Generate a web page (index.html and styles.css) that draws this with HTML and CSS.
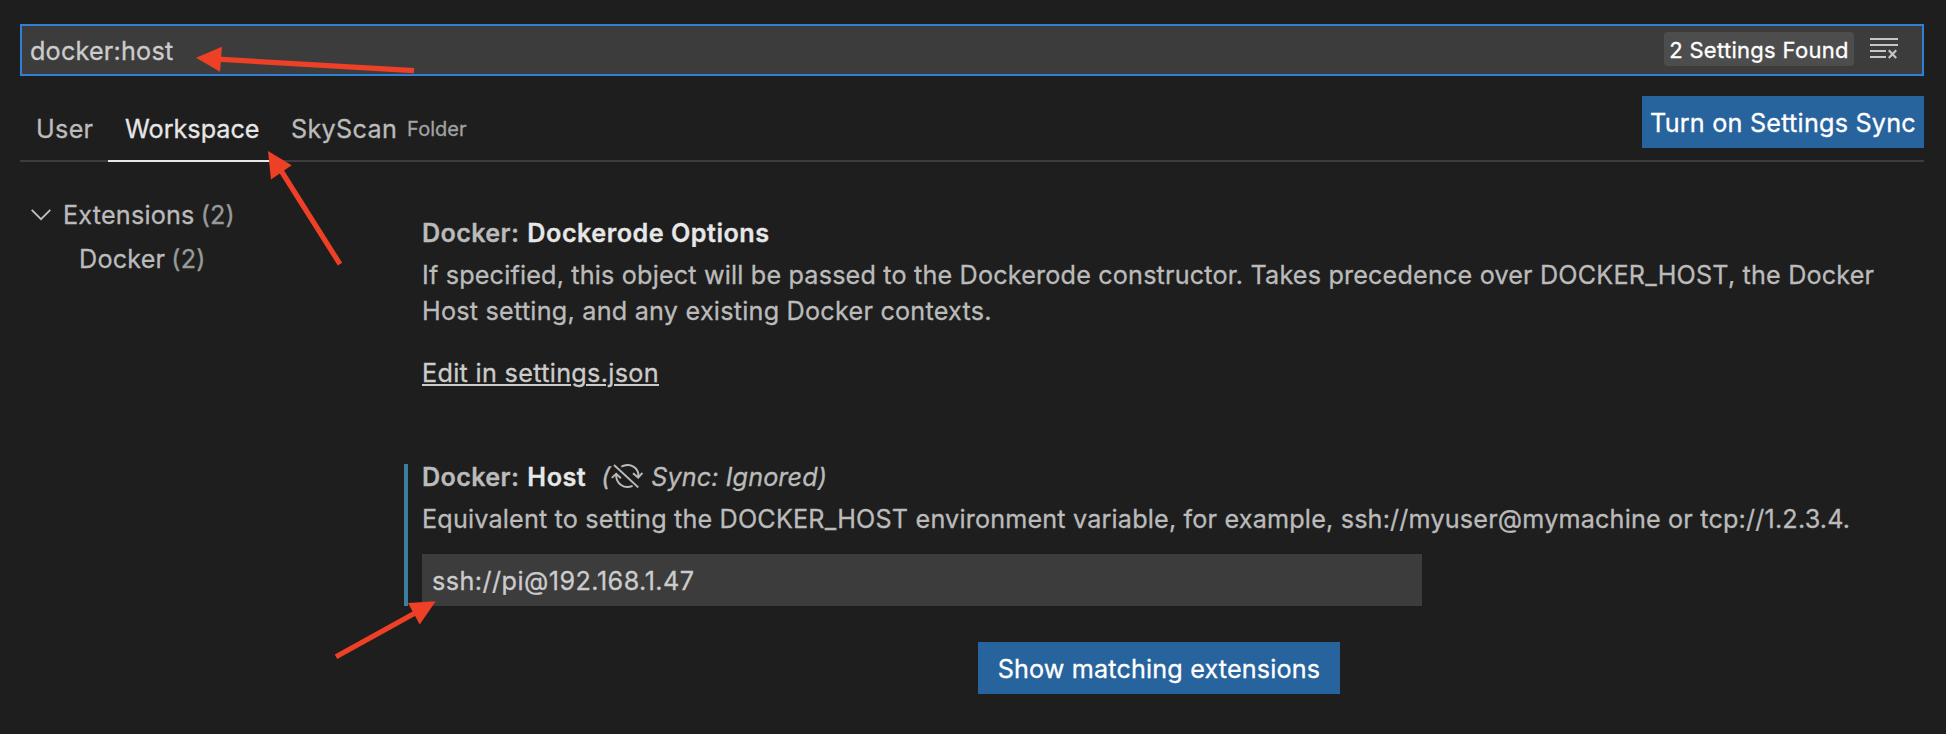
FILE: index.html
```html
<!DOCTYPE html>
<html lang="en">
<head>
<meta charset="utf-8">
<title>Settings</title>
<link rel="stylesheet" href="styles.css">
</head>
<body>
<main class="settings-editor">
  <div class="search">
    <span class="search-text">docker:host</span>
    <span class="count-badge">2 Settings Found</span>
    <svg class="clear-icon" width="28" height="22" viewBox="0 0 28 22" fill="none" stroke="#c5c5c5" stroke-width="2">
      <path d="M0 1H28M0 7H28M0 13H16M0 19H16"/>
      <path d="M18.8 12.3L26.2 20M26.2 12.3L18.8 20" stroke-width="2.2"/>
    </svg>
  </div>

  <header class="header">
    <nav class="tabs">
      <a class="tab user">User</a>
      <a class="tab active">Workspace</a>
      <a class="tab folder">SkyScan<span class="tab-detail">Folder</span></a>
    </nav>
    <button class="button sync-button">Turn on Settings Sync</button>
  </header>

  <div class="body">
    <aside class="toc">
      <div class="toc-row">
        <svg class="chevron" width="20" height="12" viewBox="0 0 20 12" fill="none" stroke="#c0c0c0" stroke-width="1.8"><path d="M.7 .9L10 10.2L19.3 .9"/></svg>
        <span>Extensions</span><span class="toc-count">(2)</span>
      </div>
      <div class="toc-row child"><span>Docker</span><span class="toc-count">(2)</span></div>
    </aside>

    <section class="list">
      <article class="setting">
        <h2 class="title"><span class="category">Docker:</span><span class="label">Dockerode Options</span></h2>
        <p class="description">If specified, this object will be passed to the Dockerode constructor. Takes precedence over DOCKER_HOST, the Docker<br><span class="second-line">Host setting, and any existing Docker contexts.</span></p>
        <a class="edit-link">Edit in settings.json</a>
      </article>

      <article class="setting modified">
        <h2 class="title"><span class="category">Docker:</span><span class="label">Host</span>
          <span class="sync-note"><span class="paren">(</span><svg class="sync-icon" width="32" height="24" viewBox="0 0 32 24" fill="none" stroke="#bbb" stroke-width="1.9">
              <path d="M3 1L27.3 23.4"/>
              <path d="M10.3 2.6C18.8-1.7 28.3 3.3 27.4 13.2M22 9.2L27.2 13.6L31.4 9"/>
              <path d="M5.1 10C4.6 19.7 13.2 25.5 21.6 21.8M.8 13.9L5.2 9.8L9.9 14.2"/>
            </svg><span class="sync-text">Sync: Ignored)</span></span>
        </h2>
        <p class="description">Equivalent to setting the DOCKER_HOST environment variable, for example, ssh://myuser@mymachine or tcp://1.2.3.4.</p>
        <div class="value-input">ssh://pi@192.168.1.47</div>
      </article>

      <button class="button match-button">Show matching extensions</button>
    </section>
  </div>
</main>

<svg class="annotations" width="1946" height="734" viewBox="0 0 1946 734">
  <g stroke="#ee4026" stroke-width="5.2"><path d="M218 59.2L414 70.6M280 169L340 264.2M416 612.5L336 656.7"/></g>
  <g fill="#ee4026">
    <path d="M196 57.7L222 46.7L220 71.7Z"/>
    <path d="M268 151L291.7 165.3L271 179.5Z"/>
    <path d="M435.7 601.3L408 603L419.7 624.5Z"/>
  </g>
</svg>
</body>
</html>
```
FILE: styles.css
```css
* { box-sizing: border-box; }

body {
  margin: 0;
  width: 1946px;
  height: 734px;
  overflow: hidden;
  background: #1e1e1e;
  color: #bbb;
  font-family: Inter, "Liberation Sans", sans-serif;
  font-size: 25.2px;
  line-height: 36px;
  letter-spacing: 0.17px;
  white-space: nowrap;
  -webkit-text-stroke-width: 0.3px;
}

.settings-editor { padding: 24px 22px 0 20px; }

.search {
  display: flex;
  align-items: center;
  height: 52px;
  padding: 0 24px 0 8px;
  border: 2px solid #3080d8;
  background: #3c3c3c;
}
.search-text { flex: 1; padding-top: 2px; color: #ccc; letter-spacing: 0.2px; }
.count-badge {
  width: 190px;
  height: 34px;
  margin: 0 16px 2px 0;
  padding-top: 1px;
  border-radius: 4px;
  background: #4d4d4d;
  color: #fff;
  font-size: 22px;
  line-height: 34px;
  letter-spacing: 0.3px;
  text-align: center;
}
.clear-icon { margin-bottom: 2px; }

.header {
  display: flex;
  justify-content: space-between;
  align-items: flex-start;
  height: 86px;
  border-bottom: 2px solid #3c3c3c;
}
.tabs { display: flex; height: 86px; }
.tab {
  display: flex;
  align-items: baseline;
  height: 86px;
  padding: 35px 12px 0 17px;
  border-bottom: 2px solid transparent;
}
.user { width: 88px; padding-left: 16px; letter-spacing: 0.3px; }
.active { width: 165px; border-color: #e7e7e7; color: #e7e7e7; letter-spacing: 0; }
.folder { padding-left: 18px; letter-spacing: 0.3px; }
.tab-detail { margin-left: 10px; color: #a2a2a2; font-size: 20px; letter-spacing: 0.05px; position: relative; top: -2px; }

.button {
  display: block;
  height: 52px;
  margin: 0;
  padding: 2px 0 0;
  border: 0;
  background: #27639d;
  color: #fff;
  font: inherit;
  text-align: center;
}
.sync-button { width: 282px; margin-top: 20px; letter-spacing: 0.22px; }

.body { display: flex; }
.toc { width: 384px; padding: 31px 0 0 11px; }
.toc-row { display: flex; align-items: center; height: 44px; letter-spacing: 0.2px; }
.toc-row.child { padding-left: 48px; }
.chevron { margin-right: 12px; }
.toc-count { margin-left: 6px; color: #999; }

.list { flex: 1; padding-top: 53px; }
.setting { padding-left: 18px; }
.title {
  display: flex;
  align-items: center;
  height: 36px;
  margin: 0;
  font-size: 25.2px;
  font-weight: 600;
  letter-spacing: 0.35px;
}
.label { margin-left: 8px; color: #e7e7e7; letter-spacing: 0.5px; }
.description { margin: 6px 0 0; }
.second-line { letter-spacing: 0.23px; }
.edit-link {
  display: block;
  width: 237px;
  margin-top: 26px;
  color: #ccc;
  letter-spacing: 0.32px;
  text-decoration: underline;
  text-decoration-thickness: 2px;
  text-underline-offset: 2px;
}

.modified {
  height: 142px;
  margin-top: 73px;
  padding-left: 14px;
  border-left: 4px solid #397f9f;
}
.modified .title { height: 26px; }
.modified .description { margin-top: 11px; }
.sync-note {
  display: flex;
  align-items: center;
  margin-left: 15px;
  font-style: italic;
  font-weight: 400;
  letter-spacing: 0.1px;
}
.paren { width: 10px; }
.sync-icon { margin: 0 8px 2px 0; }

.value-input {
  width: 1000px;
  height: 52px;
  margin-top: 17px;
  padding: 9px 10px 7px;
  background: #3c3c3c;
  color: #ccc;
  letter-spacing: 0.45px;
}

.match-button { width: 362px; margin: 36px 0 0 574px; letter-spacing: 0.15px; }

/* Red arrows drawn over the editor */
.annotations { position: absolute; left: 0; top: 0; }
```
